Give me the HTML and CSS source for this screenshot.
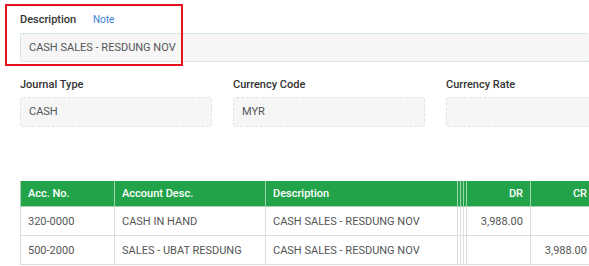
FILE: index.html
```html
<!DOCTYPE html>
<html>
<head>
	<title>Journal</title>
	<meta charset="utf-8">
	<link rel="stylesheet" href="styles.css">
</head>
<body>
	<div class="page">
		<div class="mark"></div>
		<div class="field">
			<div class="label">Description <span class="note">Note</span></div>
			<div class="box box-wide">CASH SALES - RESDUNG NOV</div>
		</div>
		<div class="row">
			<div class="field">
				<div class="label">Journal Type</div>
				<div class="box">CASH</div>
			</div>
			<div class="field">
				<div class="label">Currency Code</div>
				<div class="box">MYR</div>
			</div>
			<div class="field">
				<div class="label">Currency Rate</div>
				<div class="box"></div>
			</div>
		</div>
		<table class="grid">
			<colgroup>
				<col class="w-acc">
				<col class="w-name">
				<col class="w-desc">
				<col class="w-sep">
				<col class="w-sep">
				<col class="w-sep">
				<col class="w-num">
				<col class="w-num">
			</colgroup>
			<thead>
				<tr>
					<th>Acc. No.</th>
					<th>Account Desc.</th>
					<th>Description</th>
					<th class="c-sep"></th>
					<th class="c-sep"></th>
					<th class="c-sep"></th>
					<th class="c-num">DR</th>
					<th class="c-num">CR</th>
				</tr>
			</thead>
			<tbody>
				<tr>
					<td>320-0000</td>
					<td>CASH IN HAND</td>
					<td>CASH SALES - RESDUNG NOV</td>
					<td class="c-sep"></td>
					<td class="c-sep"></td>
					<td class="c-sep"></td>
					<td class="c-num">3,988.00</td>
					<td class="c-num"></td>
				</tr>
				<tr>
					<td>500-2000</td>
					<td>SALES - UBAT RESDUNG</td>
					<td>CASH SALES - RESDUNG NOV</td>
					<td class="c-sep"></td>
					<td class="c-sep"></td>
					<td class="c-sep"></td>
					<td class="c-num"></td>
					<td class="c-num">3,988.00</td>
				</tr>
			</tbody>
		</table>
	</div>
</body>
</html>
```

FILE: styles.css
```css
html, body {
	margin: 0;
	background: #fff;
	overflow: hidden;
}
body {
	font-family: Roboto, "Liberation Sans", sans-serif;
	color: #555;
}
.page {
	position: relative;
	width: 700px;
	padding: 12px 0 0 20px;
}
.mark {
	position: absolute;
	left: 5px;
	top: 4px;
	width: 174px;
	height: 58px;
	border: 2px solid #e3141b;
}
.label {
	font-size: 11px;
	line-height: 16px;
	font-weight: 500;
	color: #333;
	margin-bottom: 5px;
}
.note {
	font-size: 10px;
	font-weight: 400;
	color: #3d7fd9;
	margin-left: 14px;
}
.box {
	box-sizing: border-box;
	height: 30px;
	padding: 0 8px;
	font-size: 11px;
	line-height: 28px;
	color: #555;
	background: #f6f6f6;
	border: 1px dashed #e2e2e2;
	border-radius: 3px;
}
.box-wide {
	height: 29px;
	line-height: 27px;
	width: 640px;
	border: 1px dotted #b7dcc1;
}
.row {
	display: grid;
	grid-template-columns: 192px 192px 192px;
	column-gap: 21px;
	margin-top: 15px;
}
.row .label {
	margin-bottom: 4px;
}
.grid {
	margin-top: 54px;
	border-collapse: collapse;
	table-layout: fixed;
	width: 574px;
	font-size: 11px;
}
.w-acc { width: 94px; }
.w-name { width: 151px; }
.w-desc { width: 192px; }
.w-sep { width: 3px; }
.w-num { width: 64px; }
.grid th {
	background: #22a34a;
	color: #fff;
	font-weight: 500;
	text-align: left;
	height: 25px;
	padding: 0 7px;
	border: 1px solid #a3d4b0;
	border-top: 0;
}
.grid td {
	height: 28px;
	padding: 0 7px;
	border: 1px solid #dedede;
	white-space: nowrap;
}
.grid .c-sep {
	padding: 0;
}
.grid .c-num {
	text-align: right;
}
```
